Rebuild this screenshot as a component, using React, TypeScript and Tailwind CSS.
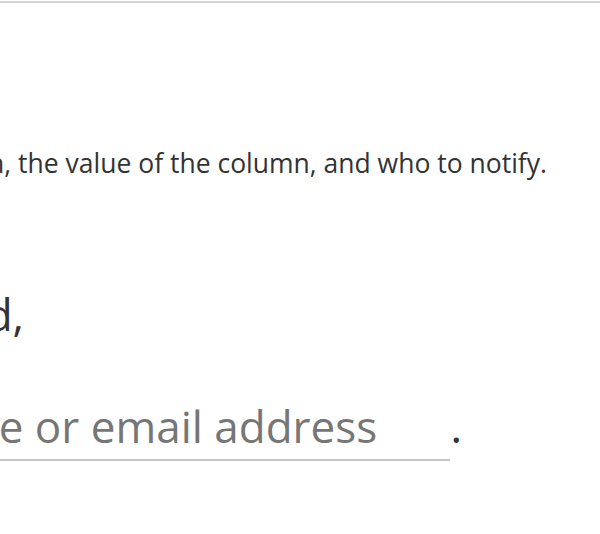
import React from "react";

const App = () => {
  return (
    <div className="min-h-screen w-full overflow-hidden bg-white font-['Open_Sans',sans-serif] text-[#333]">
      <div className="mt-px h-[2px] w-full bg-[#d4d4d4]" />

      <div className="mt-[141px] flex w-[547px] justify-end">
        <p className="whitespace-nowrap text-[26.5px] leading-normal">
          Choose the column, the value of the column, and who to notify.
        </p>
      </div>

      <div className="mt-[97px] flex w-[24px] justify-end">
        <p className="whitespace-nowrap text-[44px] leading-normal">When a new item is added,</p>
      </div>

      <div className="mt-[46px] flex w-[462px] items-baseline justify-end text-[44px] leading-normal">
        <span className="mr-3 whitespace-nowrap">send an email to</span>
        <input
          type="text"
          placeholder="Enter a name or email address"
          className="w-[701px] shrink-0 border-b-2 border-[#c6c6c6] bg-transparent p-0 text-[44px] leading-normal text-[#333] outline-none placeholder:text-[#767676]"
        />
        <span className="shrink-0">.</span>
      </div>
    </div>
  );
};

export default App;
